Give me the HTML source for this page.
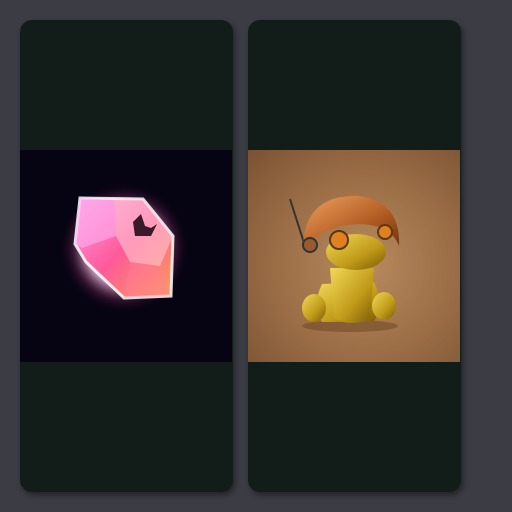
<!DOCTYPE html>
<html><head><style>
html,body{margin:0;padding:0;width:512px;height:512px;background:#3c3c45;overflow:hidden}
.card{position:absolute;top:20px;width:213px;height:472px;background:#121c18;border-radius:12px;box-shadow:2px 3px 6px rgba(0,0,0,.45);overflow:hidden}
.img{position:absolute;left:0;top:130px;width:212px;height:212px}
</style></head><body>
<div class="card" style="left:20px">
 <div class="img" style="background:#060312">
  <svg width="212" height="212" viewBox="20 150 212 212">
   <defs>
    <radialGradient id="gl" cx="0.5" cy="0.5" r="0.5"><stop offset="0.55" stop-color="#ffd0ee" stop-opacity=".85"/><stop offset="0.8" stop-color="#803060" stop-opacity=".3"/><stop offset="1" stop-color="#060312" stop-opacity="0"/></radialGradient>
    <linearGradient id="gm" x1="0" y1="0" x2="1" y2="1"><stop offset="0" stop-color="#ff9ae8"/><stop offset=".5" stop-color="#ff5a9a"/><stop offset="1" stop-color="#ffa050"/></linearGradient>
   </defs>
   <ellipse cx="124" cy="248" rx="66" ry="66" fill="url(#gl)"/>
   <polygon points="80,198 143,199 173,236 171,296 124,298 86,262 75,244" fill="url(#gm)" stroke="#fff" stroke-width="3" stroke-opacity=".85"/>
   <polygon points="80,198 114,200 116,236 82,248 75,244" fill="#ffb0f0" opacity=".6"/>
   <polygon points="114,200 143,199 173,236 160,266 130,262 116,236" fill="#ffd0d8" opacity=".55"/>
   <polygon points="130,262 160,266 171,296 124,298" fill="#ff80a0" opacity=".4"/>
   <path d="M133 222 l8 -8 l4 12 l6 2 l6 -4 l-6 12 h-16 z" fill="#3a1a2a"/>
  </svg>
 </div>
</div>
<div class="card" style="left:248px">
 <div class="img" style="background:radial-gradient(ellipse at 55% 55%,#b98a5e 0%,#9a6d46 55%,#7a5232 100%)">
  <svg width="212" height="212" viewBox="248 150 212 212">
   <defs>
    <linearGradient id="gd" x1="0" y1="0" x2="1" y2="1"><stop offset="0" stop-color="#f2d858"/><stop offset=".6" stop-color="#c09a18"/><stop offset="1" stop-color="#7a5a08"/></linearGradient>
    <linearGradient id="hm" x1="0" y1="0" x2="1" y2="1"><stop offset="0" stop-color="#f0a060"/><stop offset=".6" stop-color="#b05a20"/><stop offset="1" stop-color="#6a3010"/></linearGradient>
   </defs>
   <ellipse cx="350" cy="326" rx="48" ry="6" fill="#6a4422" opacity=".5"/>
   <line x1="290" y1="199" x2="305" y2="246" stroke="#333" stroke-width="2"/>
   <path d="M322 284 q-10 20 0 38 h52 q10 -20 0 -40 z" fill="url(#gd)"/>
   <path d="M330 268 h44 l-4 50 q-18 10 -36 0 z" fill="url(#gd)"/>
   <ellipse cx="314" cy="308" rx="12" ry="14" fill="url(#gd)"/>
   <ellipse cx="384" cy="306" rx="12" ry="14" fill="url(#gd)"/>
   <ellipse cx="356" cy="252" rx="30" ry="18" fill="url(#gd)"/>
   <path d="M303 250 q0 -56 56 -54 q42 6 40 50 q-8 -22 -42 -22 q-36 2 -54 26 z" fill="url(#hm)"/>
   <circle cx="339" cy="240" r="9" fill="#e08020" stroke="#5a3a10" stroke-width="2"/>
   <circle cx="385" cy="232" r="7" fill="#e08020" stroke="#5a3a10" stroke-width="2"/>
   <circle cx="310" cy="245" r="7" fill="#9a5a30" stroke="#333" stroke-width="2"/>
  </svg>
 </div>
</div>
</body></html>
